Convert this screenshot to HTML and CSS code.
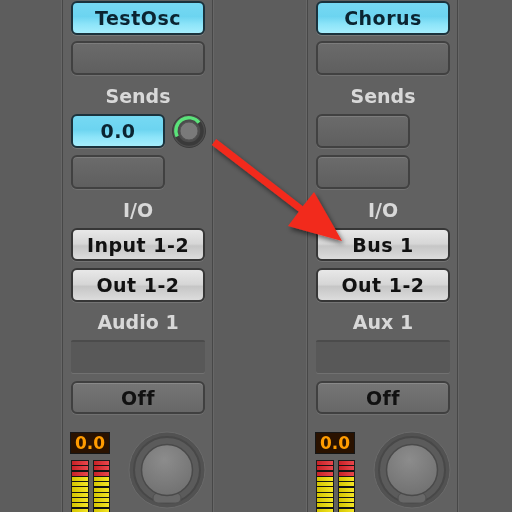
FILE: index.html
```html
<!DOCTYPE html>
<html lang="en">
<head>
  <meta charset="UTF-8">
  <title>Mixer</title>
  <link rel="stylesheet" href="styles.css">
</head>
<body>
  <div class="mixer">
    <div class="strip">
      <div class="btn btn-cyan btn-top">TestOsc</div>
      <div class="btn btn-grey gap6"></div>
      <div class="label">Sends</div>
      <div class="send-row">
        <div class="btn btn-cyan btn-send">0.0</div>
        <svg class="send-knob" width="34" height="34" viewBox="0 0 34 34">
          <circle cx="17" cy="17" r="16.5" fill="#4c4c4c" stroke="#3c3c3c"/>
          <circle cx="17" cy="17" r="13" fill="none" stroke="#3a3a3a" stroke-width="3.5"/>
          <path d="M5.2 22.5 A13 13 0 0 1 27 8.6" fill="none" stroke="#5be27a" stroke-width="3.5"/>
          <circle cx="17" cy="17" r="9" fill="#7a7a7a" stroke="#555"/>
        </svg>
      </div>
      <div class="btn btn-grey btn-send gap7"></div>
      <div class="label">I/O</div>
      <div class="btn btn-silver h33">Input 1-2</div>
      <div class="btn btn-silver gap7">Out 1-2</div>
      <div class="label short">Audio 1</div>
      <div class="field"></div>
      <div class="btn btn-off">Off</div>
      <div class="bottom">
        <div class="level">
          <div class="peak">0.0</div>
          <div class="meters"><div class="meter"></div><div class="meter"></div></div>
        </div>
        <svg class="pan" width="78" height="78" viewBox="0 0 78 78">
          <defs>
            <radialGradient id="knobfill" cx="0.45" cy="0.3" r="0.8">
              <stop offset="0" stop-color="#8c8c8c"/>
              <stop offset="1" stop-color="#6e6e6e"/>
            </radialGradient>
          </defs>
          <circle cx="39" cy="39" r="38" fill="#525252" stroke="#6a6a6a"/>
          <circle cx="39" cy="39" r="33" fill="#5b5b5b" stroke="#484848" stroke-width="2"/>
          <rect x="25" y="62" width="28" height="10" rx="5" fill="#686868" stroke="#505050"/>
          <circle cx="39" cy="39" r="25.5" fill="url(#knobfill)" stroke="#4a4a4a" stroke-width="1.5"/>
        </svg>
      </div>
    </div>

    <div class="strip">
      <div class="btn btn-cyan btn-top">Chorus</div>
      <div class="btn btn-grey gap6"></div>
      <div class="label">Sends</div>
      <div class="send-row">
        <div class="btn btn-grey btn-send"></div>
      </div>
      <div class="btn btn-grey btn-send gap7"></div>
      <div class="label">I/O</div>
      <div class="btn btn-silver h33">Bus 1</div>
      <div class="btn btn-silver gap7">Out 1-2</div>
      <div class="label short">Aux 1</div>
      <div class="field"></div>
      <div class="btn btn-off">Off</div>
      <div class="bottom">
        <div class="level">
          <div class="peak">0.0</div>
          <div class="meters"><div class="meter"></div><div class="meter"></div></div>
        </div>
        <svg class="pan" width="78" height="78" viewBox="0 0 78 78">
          <defs>
            <radialGradient id="knobfill2" cx="0.45" cy="0.3" r="0.8">
              <stop offset="0" stop-color="#8c8c8c"/>
              <stop offset="1" stop-color="#6e6e6e"/>
            </radialGradient>
          </defs>
          <circle cx="39" cy="39" r="38" fill="#525252" stroke="#6a6a6a"/>
          <circle cx="39" cy="39" r="33" fill="#5b5b5b" stroke="#484848" stroke-width="2"/>
          <rect x="25" y="62" width="28" height="10" rx="5" fill="#686868" stroke="#505050"/>
          <circle cx="39" cy="39" r="25.5" fill="url(#knobfill2)" stroke="#4a4a4a" stroke-width="1.5"/>
        </svg>
      </div>
    </div>
  </div>

  <!-- callout arrow drawn over the mixer -->
  <svg class="arrow" width="512" height="512" viewBox="0 0 512 512">
    <defs>
      <filter id="shadow" x="-20%" y="-20%" width="140%" height="140%">
        <feDropShadow dx="2" dy="3" stdDeviation="2.5" flood-color="#000" flood-opacity="0.55"/>
      </filter>
    </defs>
    <polygon points="216.2,139 302.8,206.2 314,192 342,241 288,226 298.8,211.8 211.8,145"
             fill="#f22a1f" filter="url(#shadow)"/>
  </svg>
</body>
</html>
```

FILE: styles.css
```css
body {
  margin: 0;
  width: 512px;
  height: 512px;
  overflow: hidden;
  position: relative;
  background-color: #5d5d5d;
  font-family: "DejaVu Sans", Verdana, sans-serif;
  font-weight: bold;
}
.mixer {
  display: flex;
  gap: 94px;
  padding-left: 62px;
  filter: blur(0.4px);
}
.strip {
  width: 151px;
  height: 512px;
  box-sizing: border-box;
  border-left: 1px solid #474747;
  border-right: 1px solid #474747;
  background-color: #616161;
  box-shadow: -1px 0 0 #676767, 1px 0 0 #676767;
  padding: 1px 0 0 8px;
  display: flex;
  flex-direction: column;
}
.btn {
  box-sizing: border-box;
  width: 134px;
  height: 34px;
  border-radius: 6px;
  display: flex;
  align-items: center;
  justify-content: center;
  font-size: 19px;
  letter-spacing: 0.5px;
  flex-shrink: 0;
}
.gap6 {
  margin-top: 6px;
}
.gap7 {
  margin-top: 7px;
}
.h33 {
  height: 33px;
}
.btn-cyan {
  border: 2px solid #1b323c;
  color: #0b2431;
  background: linear-gradient(#76d9f3 0%, #6cd4f0 45%, #8ce4f9 70%, #a6eefd 100%);
  box-shadow: 0 1px 0 rgba(255, 255, 255, 0.15);
}
.btn-top {
  margin-top: 0;
}
.btn-grey {
  border: 2px solid #414141;
  background: linear-gradient(#6b6b6b, #5f5f5f);
  box-shadow: inset 0 1px 0 rgba(255, 255, 255, 0.12), 0 1px 0 rgba(255, 255, 255, 0.1);
}
.btn-silver {
  border: 2px solid #363636;
  color: #111;
  background: linear-gradient(#e8e8e8 0%, #d6d6d6 48%, #c6c6c6 55%, #dcdcdc 100%);
  box-shadow: 0 1px 0 rgba(255, 255, 255, 0.12);
}
.btn-off {
  margin-top: 8px;
  height: 33px;
  border: 2px solid #404040;
  color: #111;
  background: linear-gradient(#767676, #676767);
  box-shadow: inset 0 1px 0 rgba(255, 255, 255, 0.15), 0 1px 0 rgba(255, 255, 255, 0.1);
}
.btn-send {
  width: 94px;
}
.label {
  height: 39px;
  box-sizing: border-box;
  padding-top: 2px;
  width: 134px;
  display: flex;
  align-items: center;
  justify-content: center;
  font-size: 19px;
  color: #d8d8d8;
  flex-shrink: 0;
}
.label.short {
  height: 38px;
}
.send-row {
  display: flex;
  gap: 7px;
  height: 34px;
  flex-shrink: 0;
}
.send-knob {
  display: block;
}
.field {
  width: 134px;
  height: 33px;
  box-sizing: border-box;
  background-color: #585858;
  border-top: 2px solid #4b4b4b;
  border-radius: 2px;
  box-shadow: 0 1px 0 rgba(255, 255, 255, 0.1);
  flex-shrink: 0;
}
.bottom {
  display: flex;
  gap: 18px;
  margin-top: 17px;
  margin-left: -1px;
}
.level {
  width: 40px;
  padding-top: 1px;
}
.peak {
  height: 22px;
  box-sizing: border-box;
  border: 1px solid #151515;
  background-color: #2a1200;
  color: #ff9c00;
  font-size: 17px;
  display: flex;
  align-items: center;
  justify-content: center;
}
.meters {
  display: flex;
  gap: 4px;
  margin-top: 6px;
  padding-left: 1px;
}
.meter {
  width: 18px;
  height: 60px;
  box-sizing: border-box;
  border: 1px solid #1c1c1c;
  background:
    repeating-linear-gradient(to bottom, transparent 0 4px, #141414 4px 5.3px),
    linear-gradient(to right, rgba(0, 0, 0, 0.12), rgba(255, 255, 255, 0.15)),
    linear-gradient(to bottom, #e4262c 0 16px, #f2e100 16px);
}
.pan {
  display: block;
}
.arrow {
  position: absolute;
  top: 0;
  left: 0;
  pointer-events: none;
}
```
